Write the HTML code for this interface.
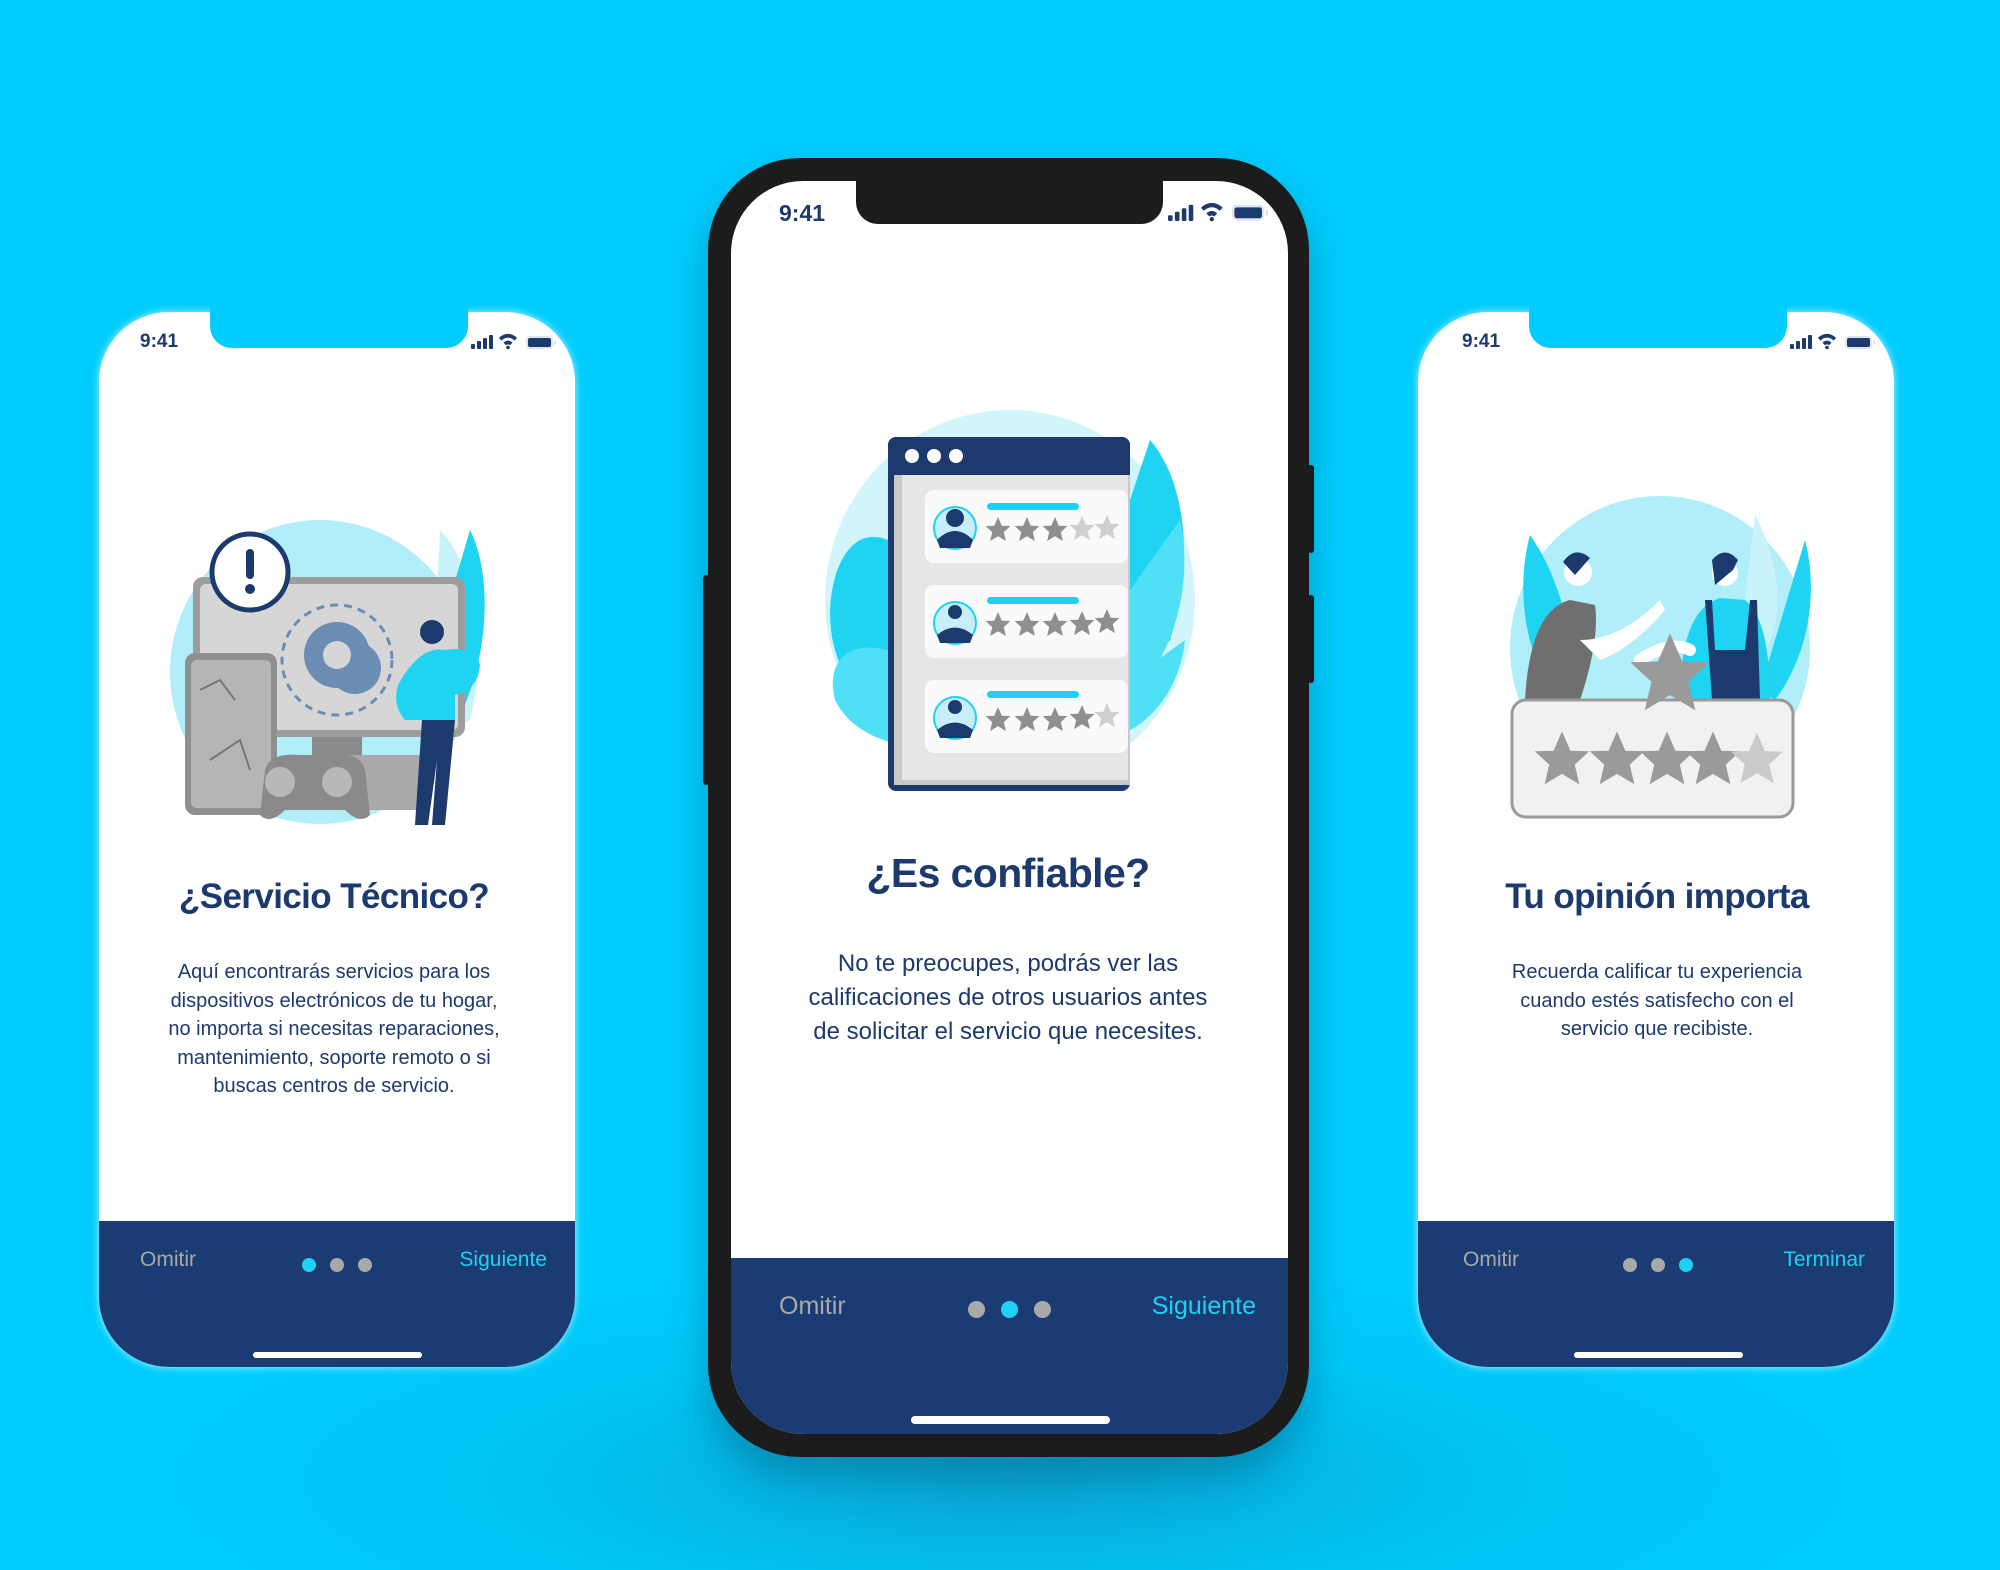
<!DOCTYPE html>
<html><head><meta charset="utf-8">
<style>
*{margin:0;padding:0;box-sizing:border-box}
body{width:2000px;height:1570px;overflow:hidden;background:radial-gradient(ellipse 900px 220px at 1010px 1480px,#0aa6d4 0%,#00c6f6 60%,#00cdfe 100%),#00cdfe;font-family:"Liberation Sans",sans-serif;position:relative}
.abs{position:absolute}
.scr{position:absolute;background:#fff;overflow:hidden}
.nav{position:absolute;left:0;right:0;bottom:0;background:#1b3c72}
.t{position:absolute;text-align:center;color:#1c3a6d;white-space:nowrap}
.time{position:absolute;font-weight:bold;color:#1c3a6d}
.dot{position:absolute;border-radius:50%;background:#a9a9a9}
.on{background:#1fd0f5}
</style></head><body>

<div class="scr" style="left:99px;top:312px;width:476px;height:1055px;border-radius:70px;box-shadow:0 0 8px rgba(255,255,255,.7)">
  <div class="nav" style="height:146px"></div>
</div>
<div class="abs" style="left:210px;top:300px;width:258px;height:48px;background:#00cdfe;border-radius:0 0 22px 22px"></div>
<div class="time" style="left:140px;top:331px;font-size:19px">9:41</div>

<div class="scr" style="left:1418px;top:312px;width:476px;height:1055px;border-radius:70px;box-shadow:0 0 8px rgba(255,255,255,.7)">
  <div class="nav" style="height:146px"></div>
</div>
<div class="abs" style="left:1529px;top:300px;width:258px;height:48px;background:#00cdfe;border-radius:0 0 22px 22px"></div>
<div class="time" style="left:1462px;top:331px;font-size:19px">9:41</div>

<div class="abs" style="left:708px;top:158px;width:601px;height:1299px;background:#1c1c1c;border-radius:92px;box-shadow:0 20px 40px rgba(0,60,90,.35)"></div>
<div class="scr" style="left:731px;top:181px;width:557px;height:1253px;border-radius:72px">
  <div class="nav" style="height:176px"></div>
</div>
<div class="abs" style="left:856px;top:170px;width:307px;height:54px;background:#1c1c1c;border-radius:0 0 22px 22px"></div>
<div class="abs" style="left:1308px;top:465px;width:6px;height:88px;background:#1c1c1c;border-radius:3px"></div>
<div class="abs" style="left:1308px;top:595px;width:6px;height:88px;background:#1c1c1c;border-radius:3px"></div>
<div class="abs" style="left:703px;top:575px;width:6px;height:210px;background:#1c1c1c;border-radius:3px"></div>
<div class="time" style="left:779px;top:200px;font-size:23px">9:41</div>

<svg class="abs" style="left:0;top:0" width="2000" height="1570" viewBox="0 0 2000 1570">
 <defs>
  <g id="sig"><rect x="0" y="8" width="4" height="5" rx="1"/><rect x="6" y="5" width="4" height="8" rx="1"/><rect x="12" y="2" width="4" height="11" rx="1"/><rect x="18" y="-1" width="4" height="14" rx="1"/></g>
  <g id="wifi"><path d="M0 4 A12 12 0 0 1 18 4 L15.5 6.6 A8.5 8.5 0 0 0 2.5 6.6Z"/><path d="M4.5 8.7 A6 6 0 0 1 13.5 8.7 L11 11.3 A2.7 2.7 0 0 0 7 11.3Z"/><circle cx="9" cy="13.5" r="1.8"/></g>
  <g id="bat"><rect x="0" y="0" width="27" height="13" rx="3.5" fill="#dfe5ee"/><rect x="2" y="2" width="23" height="9" rx="2"/><rect x="28" y="4" width="2" height="5" rx="1" fill="#dfe5ee"/></g>
  <path id="star" d="M0 -13 L3.8 -4.2 L12.4 -4 L5.8 2.1 L7.9 11 L0 6.3 L-7.9 11 L-5.8 2.1 L-12.4 -4 L-3.8 -4.2Z"/>
 </defs>
 <g fill="#1c3a6d">
  <use href="#sig" transform="translate(471,336)"/><use href="#wifi" transform="translate(499,334)"/><use href="#bat" transform="translate(526,336)"/>
  <use href="#sig" transform="translate(1790,336)"/><use href="#wifi" transform="translate(1818,334)"/><use href="#bat" transform="translate(1845,336)"/>
  <use href="#sig" transform="translate(1168,206) scale(1.15)"/><use href="#wifi" transform="translate(1201,203) scale(1.2)"/><use href="#bat" transform="translate(1232,205) scale(1.2)"/>
 </g>

 <ellipse cx="1010" cy="600" rx="185" ry="190" fill="#d2f5fc"/>
 <path d="M888 540 C840 520 820 600 835 650 C850 700 880 720 900 730Z" fill="#1fd3f2"/>
 <path d="M888 650 C850 640 825 660 835 700 C850 730 880 740 900 745Z" fill="#4fe0f6"/>
 <path d="M1150 440 C1185 480 1195 560 1170 640 L1130 690 L1130 500Z" fill="#1fd3f2"/>
 <path d="M1180 520 C1195 590 1170 660 1130 700 L1130 590Z" fill="#4fe0f6"/>
 <path d="M1185 640 C1180 690 1150 720 1130 730 L1130 680Z" fill="#4fe0f6"/>
 <rect x="888" y="437" width="242" height="354" rx="8" fill="#1c3a6d"/>
 <rect x="894" y="475" width="236" height="310" fill="#c9c9c9"/>
 <rect x="902" y="475" width="226" height="305" fill="#e6e6e6"/>
 <rect x="888" y="437" width="242" height="38" rx="8" fill="#1c3a6d"/>
 <circle cx="912" cy="456" r="7" fill="#fff"/><circle cx="934" cy="456" r="7" fill="#fff"/><circle cx="956" cy="456" r="7" fill="#fff"/>
 <g>
  <rect x="925" y="490" width="203" height="73" rx="9" fill="#fafafa"/>
  <rect x="925" y="585" width="203" height="73" rx="9" fill="#fafafa"/>
  <rect x="925" y="680" width="203" height="73" rx="9" fill="#fafafa"/>
  <g fill="#1fd0f5"><rect x="987" y="503" width="92" height="7" rx="3.5"/><rect x="987" y="597" width="92" height="7" rx="3.5"/><rect x="987" y="691" width="92" height="7" rx="3.5"/></g>
  <g fill="#c8eefa" stroke="#1fd0f5" stroke-width="2"><circle cx="955" cy="528" r="21"/><circle cx="955" cy="623" r="21"/><circle cx="955" cy="718" r="21"/></g>
  <g fill="#1c3a6d"><path d="M937 540 Q955 522 973 540 L970 548 L940 548Z"/><path d="M937 635 Q955 620 973 635 L970 643 L940 643Z"/><path d="M937 730 Q955 715 973 730 L970 738 L940 738Z"/>
   <circle cx="955" cy="518" r="9"/><circle cx="955" cy="612" r="7"/><circle cx="955" cy="707" r="7"/></g>
  <g fill="#8f8f8f">
   <use href="#star" x="998" y="530"/><use href="#star" x="1027" y="530"/><use href="#star" x="1055" y="530"/>
   <use href="#star" x="998" y="625"/><use href="#star" x="1027" y="625"/><use href="#star" x="1055" y="625"/><use href="#star" x="1082" y="624"/><use href="#star" x="1107" y="622"/>
   <use href="#star" x="998" y="720"/><use href="#star" x="1027" y="720"/><use href="#star" x="1055" y="720"/><use href="#star" x="1082" y="718"/>
  </g>
  <g fill="#cfcfcf"><use href="#star" x="1082" y="529"/><use href="#star" x="1107" y="528"/><use href="#star" x="1107" y="716"/></g>
 </g>

 <ellipse cx="320" cy="672" rx="150" ry="152" fill="#b2eefa"/>
 <path d="M440 530 C470 560 490 640 470 720 L430 740 Z" fill="#c9f3fb"/>
 <path d="M470 530 C495 580 490 680 440 750 L420 700Z" fill="#1fd3f2"/>
 <rect x="193" y="577" width="272" height="160" rx="10" fill="#9d9d9d"/>
 <rect x="200" y="584" width="258" height="146" rx="6" fill="#d6d6d6"/>
 <rect x="312" y="737" width="50" height="25" fill="#8a8a8a"/>
 <rect x="285" y="755" width="140" height="55" rx="4" fill="#a9a9a9"/>
 <g fill="#6b8db3"><circle cx="337" cy="655" r="33"/><circle cx="355" cy="668" r="26"/></g>
 <circle cx="337" cy="655" r="14" fill="#d6d6d6"/>
 <circle cx="337" cy="660" r="55" fill="none" stroke="#6b8db3" stroke-width="3" stroke-dasharray="8 6"/>
 <rect x="185" y="653" width="92" height="162" rx="10" fill="#8f8f8f"/>
 <rect x="191" y="660" width="80" height="148" rx="6" fill="#b5b5b5"/>
 <path d="M200 690 L220 680 L235 700 M210 760 L240 740 L250 770" stroke="#777" stroke-width="2" fill="none"/>
 <path d="M265 770 Q270 752 300 755 L335 755 Q360 752 365 770 L370 815 Q360 825 345 810 L285 810 Q270 825 260 815Z" fill="#8a8a8a"/>
 <circle cx="280" cy="782" r="15" fill="#b8b8b8"/><circle cx="337" cy="782" r="15" fill="#b8b8b8"/>
 <circle cx="250" cy="572" r="38" fill="#fff" stroke="#1c3a6d" stroke-width="5"/>
 <rect x="246" y="549" width="8" height="30" rx="4" fill="#1c3a6d"/><circle cx="250" cy="589" r="5" fill="#1c3a6d"/>
 <path d="M398 685 Q420 645 445 650 Q475 645 480 665 Q478 690 455 695 L455 720 L405 720 Q392 705 398 685Z" fill="#1fd3f2"/>
 <circle cx="432" cy="632" r="12" fill="#1c3a6d"/>
 <path d="M422 720 L455 720 L445 825 L432 825 L437 760 L428 825 L415 825Z" fill="#1c3a6d"/>

 <ellipse cx="1660" cy="648" rx="150" ry="152" fill="#b0eefa"/>
 <path d="M1530 535 C1515 590 1525 660 1560 700 L1580 690 C1570 620 1555 570 1530 535Z" fill="#1fd3f2"/>
 <path d="M1805 540 C1820 600 1805 660 1775 700 L1760 690Z" fill="#1fd3f2"/>
 <path d="M1755 515 C1780 560 1785 620 1765 650 L1745 600Z" fill="#c9f3fb"/>
 <path d="M1525 700 Q1530 610 1570 600 L1595 605 Q1600 640 1580 700Z" fill="#6f6f6f"/>
 <path d="M1580 640 Q1620 640 1660 600 L1665 610 Q1630 650 1600 660Z" fill="#fff"/>
 <circle cx="1578" cy="572" r="14" fill="#fff"/><path d="M1563 562 Q1575 545 1590 558 L1575 575Z" fill="#1c3a6d"/>
 <path d="M1680 700 Q1680 610 1720 598 L1745 600 Q1770 620 1770 700Z" fill="#1fd3f2"/>
 <path d="M1705 600 L1712 600 L1715 650 L1745 650 L1750 600 L1757 600 L1760 700 L1712 700Z" fill="#1c3a6d"/>
 <circle cx="1725" cy="573" r="13" fill="#fff"/><path d="M1712 560 Q1725 545 1738 560 L1733 570 L1715 585Z" fill="#1c3a6d"/>
 <path d="M1640 660 Q1670 640 1690 650" stroke="#fff" stroke-width="12" fill="none" stroke-linecap="round"/>
 <rect x="1512" y="700" width="281" height="117" rx="14" fill="#f1f1f1" stroke="#9a9a9a" stroke-width="3"/>
 <g fill="#9a9a9a">
  <use href="#star" transform="translate(1670,675) scale(3.2)"/>
  <use href="#star" transform="translate(1562,760) scale(2.2)"/>
  <use href="#star" transform="translate(1617,760) scale(2.2)"/>
  <use href="#star" transform="translate(1667,760) scale(2.2)"/>
  <use href="#star" transform="translate(1713,760) scale(2.2)"/>
 </g>
 <use href="#star" fill="#cacaca" transform="translate(1757,760) scale(2.1)"/>
</svg>

<div class="t" style="left:134px;width:400px;top:877px;font-size:35px;font-weight:bold;letter-spacing:-0.6px">¿Servicio Técnico?</div>
<div class="t" style="left:134px;width:400px;top:958px;font-size:20px;line-height:28.6px">Aquí encontrarás servicios para los<br>dispositivos electrónicos de tu hogar,<br>no importa si necesitas reparaciones,<br>mantenimiento, soporte remoto o si<br>buscas centros de servicio.</div>

<div class="t" style="left:808px;width:400px;top:850px;font-size:41px;font-weight:bold;letter-spacing:-0.6px">¿Es confiable?</div>
<div class="t" style="left:758px;width:500px;top:947px;font-size:24px;line-height:34px">No te preocupes, podrás ver las<br>calificaciones de otros usuarios antes<br>de solicitar el servicio que necesites.</div>

<div class="t" style="left:1457px;width:400px;top:877px;font-size:35px;font-weight:bold;letter-spacing:-0.6px">Tu opinión importa</div>
<div class="t" style="left:1457px;width:400px;top:958px;font-size:20px;line-height:28.6px">Recuerda calificar tu experiencia<br>cuando estés satisfecho con el<br>servicio que recibiste.</div>

<div class="abs" style="left:140px;top:1248px;font-size:21px;color:#a9a9a9">Omitir</div>
<div class="dot on" style="left:302px;top:1258px;width:14px;height:14px"></div>
<div class="dot" style="left:330px;top:1258px;width:14px;height:14px"></div>
<div class="dot" style="left:358px;top:1258px;width:14px;height:14px"></div>
<div class="abs" style="right:1453px;top:1248px;font-size:21px;color:#1fd0f5">Siguiente</div>
<div class="abs" style="left:253px;top:1352px;width:169px;height:6px;background:#fff;border-radius:3px"></div>

<div class="abs" style="left:779px;top:1292px;font-size:25px;color:#a9a9a9">Omitir</div>
<div class="dot" style="left:968px;top:1301px;width:17px;height:17px"></div>
<div class="dot on" style="left:1001px;top:1301px;width:17px;height:17px"></div>
<div class="dot" style="left:1034px;top:1301px;width:17px;height:17px"></div>
<div class="abs" style="right:744px;top:1292px;font-size:25px;color:#1fd0f5">Siguiente</div>
<div class="abs" style="left:911px;top:1416px;width:199px;height:8px;background:#fff;border-radius:4px"></div>

<div class="abs" style="left:1463px;top:1248px;font-size:21px;color:#a9a9a9">Omitir</div>
<div class="dot" style="left:1623px;top:1258px;width:14px;height:14px"></div>
<div class="dot" style="left:1651px;top:1258px;width:14px;height:14px"></div>
<div class="dot on" style="left:1679px;top:1258px;width:14px;height:14px"></div>
<div class="abs" style="right:135px;top:1248px;font-size:21px;color:#1fd0f5">Terminar</div>
<div class="abs" style="left:1574px;top:1352px;width:169px;height:6px;background:#fff;border-radius:3px"></div>
</body></html>
